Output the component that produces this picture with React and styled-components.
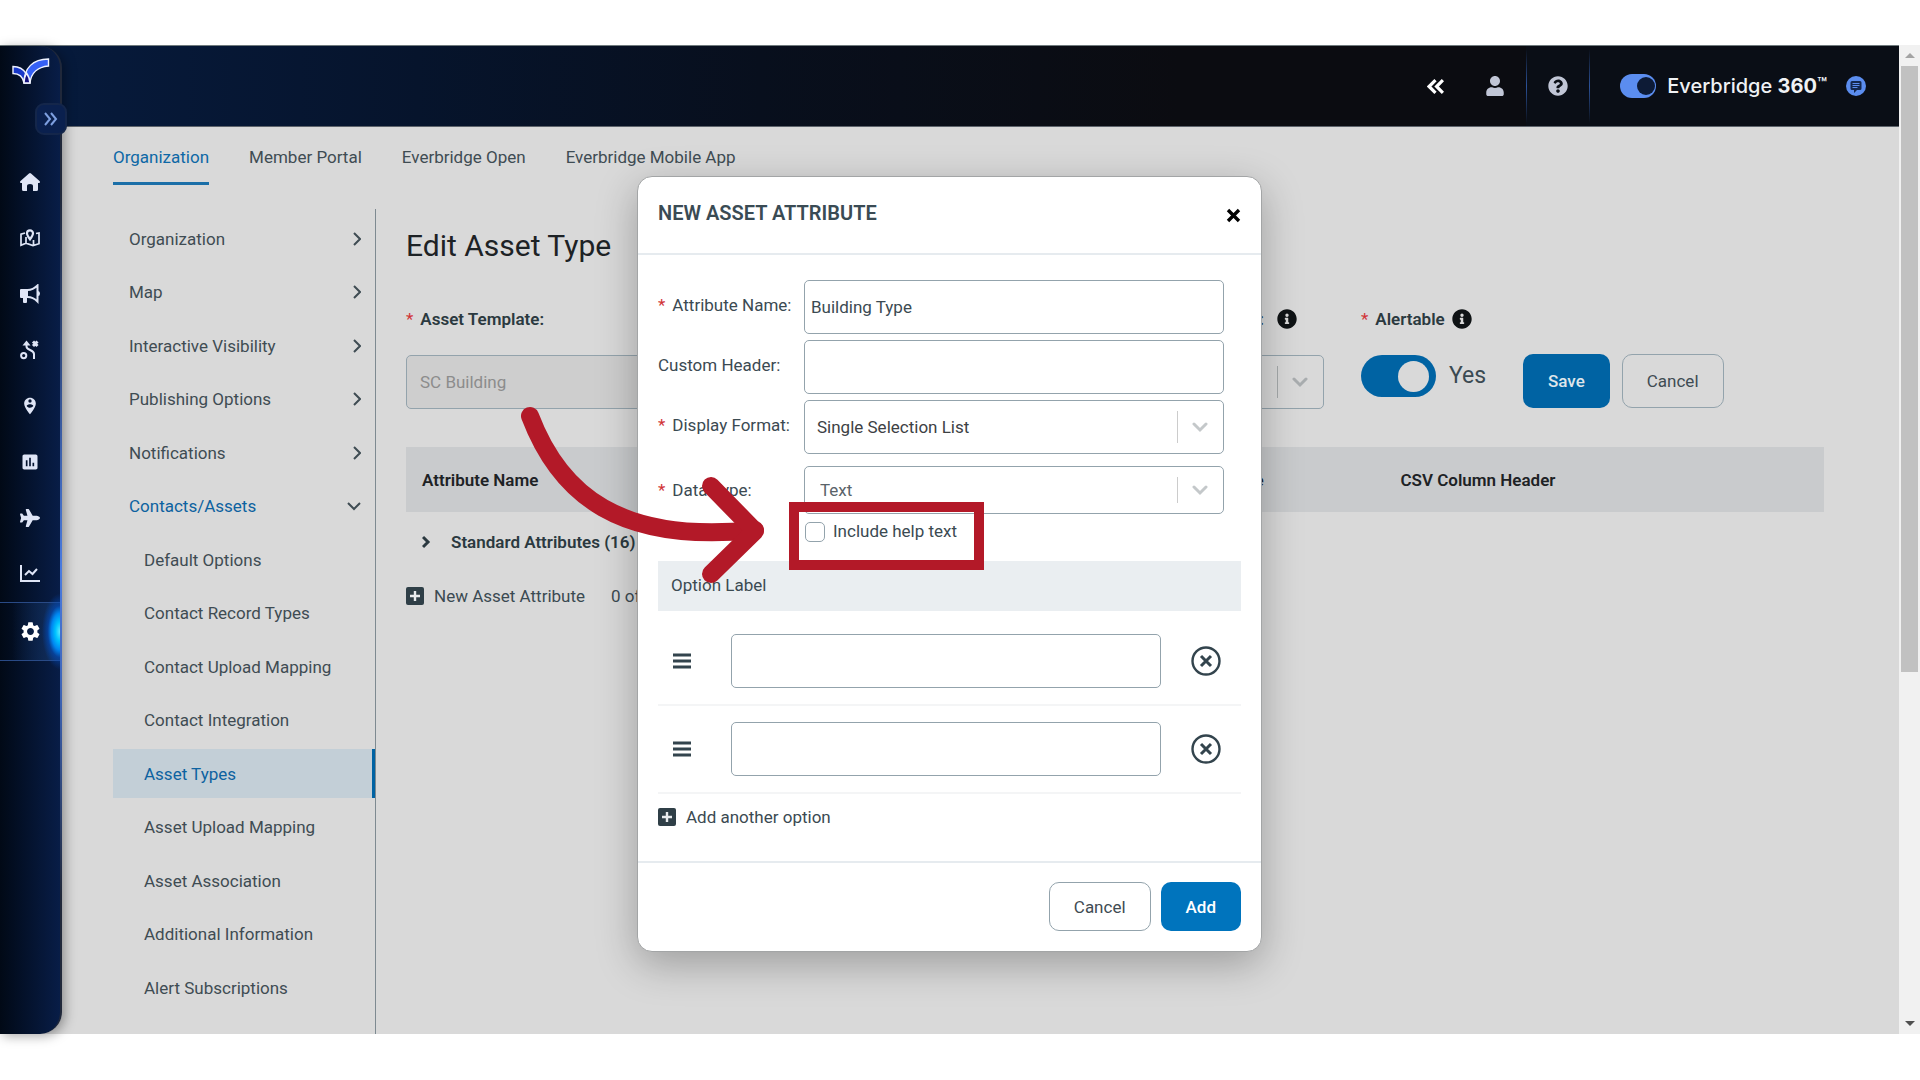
import React from "react";
import styled, { createGlobalStyle, css } from "styled-components";
import { FaInfoCircle, FaPlane, FaQuestionCircle, FaUser } from "react-icons/fa";
import { MdAssessment, MdPersonPinCircle, MdSettings } from "react-icons/md";

const GlobalStyle = createGlobalStyle`
    * {
        box-sizing: border-box;
    }
    body {
        margin: 0;
        background: #fff;
        color: #3b4a52;
        font-family: Roboto, "Liberation Sans", sans-serif;
        font-size: 17px;
        line-height: 20px;
    }
    button, input, select {
        font: inherit;
        color: inherit;
    }
    a {
        color: inherit;
        text-decoration: none;
    }
    ul {
        margin: 0;
        padding: 0;
        list-style: none;
    }
    svg {
        display: block;
        flex: none;
    }
`;

const Page = styled.div`
    display: flex;
    min-height: 100vh;
    padding: 45px 0 46px;
`;
const Shell = styled.div`
    position: relative;
    display: grid;
    flex: 1;
    grid-template-columns: 62px minmax(0, 1fr);
    grid-template-rows: 82px 1fr;
    background: #d9d9d9;
`;

/* top bar */
const TopBar = styled.header`
    grid-column: 1 / -1;
    grid-row: 1;
    display: flex;
    justify-content: flex-end;
    border-top: 1px solid #6f7a7d;
    border-bottom: 1px solid #5d636b;
    background: linear-gradient(90deg, #061b3e 0, #06142c 22%, #080f1d 40%, #0b0c11 62%);
`;
const BarButton = styled.button`
    display: flex;
    align-items: center;
    justify-content: center;
    width: ${({ $width }) => $width}px;
    padding: 0;
    border: 0;
    background: none;
    color: ${({ $bright }) => ($bright ? "#fff" : "#c1c6d6")};
`;
const BarGroup = styled.div`
    display: flex;
    align-items: center;
    height: 100%;
    padding-right: 14px;
    background: #0a0e16;
`;
const BarLine = styled.span`
    width: 1px;
    height: 74px;
    background: linear-gradient(#0a0e16, #2c5299 50%, #0a0e16);
`;
const Suite = styled.label`
    display: flex;
    align-items: center;
    gap: 11px;
    padding-left: 30px;
    color: #f0f2f5;
    font-family: Inter, "Liberation Sans", sans-serif;
    font-size: 20px;
    font-weight: 500;
    b {
        font-weight: 700;
    }
    small {
        font-size: 16px;
        font-weight: 600;
        vertical-align: 4px;
        line-height: 12px;
    }
`;
const Toggle = styled.input`
    appearance: none;
    display: flex;
    align-items: center;
    justify-content: flex-end;
    flex: none;
    margin: 0;
    width: ${({ $large }) => ($large ? 75 : 36)}px;
    height: ${({ $large }) => ($large ? 42 : 24)}px;
    padding: ${({ $large }) => ($large ? "0 7px" : "0 1px")};
    border-radius: 21px;
    background: ${({ $large }) => ($large ? "#0063a3" : "#5b8def")};
    &::before {
        content: "";
        width: ${({ $large }) => ($large ? 31 : 18)}px;
        height: ${({ $large }) => ($large ? 31 : 18)}px;
        border-radius: 50%;
        background: ${({ $large }) => ($large ? "#d9d9d9" : "#0d1b36")};
    }
`;

/* icon rail */
const Rail = styled.aside`
    grid-column: 1;
    grid-row: 1 / -1;
    z-index: 1;
    margin-top: 1px;
    border-right: 2px solid transparent;
    border-radius: 0 22px 22px 0;
    background:
        linear-gradient(90deg, #010916 0, #04122c 45%, #081d47 100%) padding-box,
        linear-gradient(#20283a 0, #20283a 15%, #4a7be0 53%, #3d63b4 66%, #20283a 86%) border-box;
    box-shadow: 3px 2px 12px rgba(0, 0, 0, 0.35);
`;
const Brand = styled.a`
    display: block;
    height: 57px;
    padding: 12px 0 0 12px;
`;
const Expand = styled.button`
    display: flex;
    align-items: center;
    justify-content: center;
    width: 32px;
    height: 32px;
    margin: 0 -7px 19px 35px;
    padding: 0;
    border: 2px solid #14264a;
    border-radius: 9px;
    background: #0a204e;
    color: #7d9fe0;
`;
const RailLink = styled.a`
    position: relative;
    display: flex;
    align-items: center;
    justify-content: center;
    height: 56px;
    color: #dfe5f6;
    ${({ $active }) =>
        $active &&
        css`
            height: 59px;
            color: #fff;
            border-block: 1px solid #294a86;
            background: linear-gradient(90deg, transparent 20%, #12305f 100%);
            &::after {
                content: "";
                position: absolute;
                inset: -10px 0 -10px auto;
                width: 18px;
                background: radial-gradient(ellipse 18px 38px at 100% 50%, #5eeaff 0, #00c3ff 25%, #0086f0 48%, rgba(0, 80, 200, 0.55) 68%, transparent 100%);
            }
        `}
`;

/* main area */
const Main = styled.main`
    grid-column: 2;
    grid-row: 2;
    display: flex;
    flex-direction: column;
    padding: 0 75px 0 51px;
`;
const Tabs = styled.nav`
    display: flex;
    gap: 40px;
    margin-bottom: 24px;
`;
const Tab = styled.a`
    padding: 20px 0 15px;
    border-bottom: 3px solid ${({ $active }) => ($active ? "#1b6fa8" : "transparent")};
    color: ${({ $active }) => ($active ? "#0d68a6" : "#3f4c53")};
`;
const Columns = styled.div`
    display: flex;
    flex: 1;
`;
const SideNav = styled.ul`
    display: flex;
    flex: 0 0 263px;
    flex-direction: column;
    justify-content: space-between;
    padding: 5px 0 22px;
    border-right: 1px solid #7e8a91;
`;
const NavLink = styled.a`
    display: flex;
    align-items: center;
    justify-content: space-between;
    height: 49px;
    padding: 0 14px 0 ${({ $sub }) => ($sub ? 31 : 16)}px;
    color: ${({ $active, $open }) => ($active || $open ? "#0d62a0" : "#3f4c53")};
    svg {
        color: #3f4c53;
    }
    ${({ $active }) =>
        $active &&
        css`
            border-right: 3px solid #0063a3;
            background: #c3cfd7;
        `}
`;
const Content = styled.section`
    flex: 1;
    min-width: 0;
    padding: 19px 0 0 30px;
`;
const Title = styled.h1`
    margin: 0 0 45px;
    color: #1d2225;
    font-size: 30px;
    font-weight: 400;
    line-height: 36px;
`;
const FormRow = styled.div`
    display: flex;
    margin-bottom: 38px;
`;
const Field = styled.div`
    flex: none;
    width: ${({ $width }) => $width}px;
    margin-right: ${({ $after }) => $after}px;
`;
const FieldLabel = styled.label`
    display: flex;
    align-items: center;
    justify-content: ${({ $end }) => ($end ? "flex-end" : "flex-start")};
    gap: ${({ $end }) => ($end ? 13 : 7)}px;
    height: 20px;
    margin-bottom: 26px;
    padding-right: ${({ $end }) => ($end ? 27 : 0)}px;
    color: #2b3940;
    font-weight: 600;
    svg {
        color: #0f1315;
    }
`;
const Star = styled.span`
    margin-right: ${({ $wide }) => ($wide ? 7 : 0)}px;
    color: #d13438;
    font-weight: 400;
`;
const TextBox = styled.input`
    display: block;
    width: 100%;
    height: 54px;
    padding: 0 ${({ disabled }) => (disabled ? 13 : 6)}px;
    border: 1px solid #93a3ac;
    border-radius: 5px;
    background: ${({ disabled }) => (disabled ? "#cecece" : "#fff")};
    color: ${({ disabled }) => (disabled ? "#8c8c8c" : "#3b4a52")};
`;
const SelectWrap = styled.div`
    position: relative;
    color: ${({ $dim }) => ($dim ? "#a9adaf" : "#c4c8ca")};
    svg {
        position: absolute;
        top: 50%;
        right: 16px;
        margin-top: -5px;
    }
    &::after {
        content: "";
        position: absolute;
        top: 11px;
        bottom: 11px;
        right: 46px;
        width: 1px;
        background: ${({ $dim }) => ($dim ? "#a5a9ab" : "#ccc")};
    }
`;
const Select = styled.select`
    appearance: none;
    display: block;
    width: 100%;
    height: ${({ $short }) => ($short ? 48 : 54)}px;
    padding: 0 50px 0 ${({ $short }) => ($short ? 15 : 12)}px;
    border: 1px solid #93a3ac;
    border-radius: 5px;
    background: ${({ $dim }) => ($dim ? "#cecece" : "#fff")};
    background: transparent;
    color: ${({ $short }) => ($short ? "#5a6369" : "#3d4144")};
`;
const YesNo = styled.div`
    display: flex;
    align-items: center;
    gap: 13px;
    font-size: 23px;
`;
const Button = styled.button`
    height: ${({ $tall }) => ($tall ? 54 : 49)}px;
    padding: 0 24px;
    border: 1px solid ${({ $primary }) => ($primary ? "transparent" : "#93a3ac")};
    border-radius: 10px;
    background: ${({ $primary, $tall }) => {
        if (!$primary) return "transparent";
        return $tall ? "#0063a3" : "#0074bd";
    }};
    color: ${({ $primary, $tall }) => {
        if (!$primary) return "#3f4c53";
        return $tall ? "#dfe6eb" : "#fff";
    }};
    font-weight: ${({ $primary }) => ($primary ? 500 : 400)};
`;
const FormActions = styled.div`
    display: flex;
    gap: 12px;
    margin-top: 45px;
`;
const Table = styled.table`
    width: 100%;
    border-collapse: collapse;
    table-layout: fixed;
    th {
        height: 65px;
        padding: 0 16px;
        background: #c9cbcd;
        color: #1d2225;
        font-weight: 600;
        text-align: left;
    }
    td {
        height: 59px;
        padding: 0 16px;
        color: #2b3940;
        font-weight: 600;
    }
`;
const GroupToggle = styled.button`
    display: flex;
    align-items: center;
    gap: 20px;
    padding: 0;
    border: 0;
    background: none;
`;
const AddLine = styled.div`
    display: flex;
    align-items: center;
    gap: 26px;
    margin-top: 15px;
`;
const AddButton = styled.button`
    display: flex;
    align-items: center;
    gap: 10px;
    padding: 0;
    border: 0;
    background: none;
    svg {
        color: #2f3f47;
    }
`;

/* dialog */
const Overlay = styled.div`
    position: absolute;
    inset: 0;
    z-index: 2;
    display: flex;
    justify-content: center;
    align-items: flex-start;
    padding-top: 131px;
`;
const Dialog = styled.section`
    position: relative;
    width: 625px;
    border: 1px solid #a3a5a6;
    border-radius: 15px;
    background: #fff;
    box-shadow: 0 12px 40px rgba(0, 0, 0, 0.28);
`;
const DialogHead = styled.div`
    display: flex;
    align-items: center;
    justify-content: space-between;
    height: 78px;
    padding: 0 20px 4px;
    border-bottom: 2px solid #e6ebef;
    h2 {
        margin: 0;
        color: #3a4b54;
        font-size: 20px;
        font-weight: 600;
    }
`;
const IconButton = styled.button`
    display: flex;
    padding: ${({ $dark }) => ($dark ? "4px 0 0" : 0)};
    border: 0;
    background: none;
    color: ${({ $dark }) => ($dark ? "#000" : "#33444d")};
`;
const DialogBody = styled.div`
    padding: 25px 20px 34px;
`;
const DialogRow = styled.div`
    display: grid;
    grid-template-columns: 146px 420px;
    align-items: center;
    margin-bottom: ${({ $gap }) => $gap}px;
    > label {
        padding-bottom: ${({ $level }) => ($level ? 0 : 4)}px;
        white-space: nowrap;
    }
`;
const CheckLabel = styled.label`
    display: flex;
    gap: 8px;
    width: 160px;
    height: 40px;
    margin-left: 147px;
`;
const CheckBox = styled.input`
    appearance: none;
    flex: none;
    width: 20px;
    height: 20px;
    margin: 1px 0 0;
    border: 1px solid #93a3ac;
    border-radius: 5px;
    background: #fff;
`;
const OptionHead = styled.div`
    height: 50px;
    padding: 14px 13px;
    background: #eaeef1;
`;
const OptionRow = styled.li`
    display: flex;
    align-items: center;
    gap: 30px;
    padding: 16px 20px 16px 15px;
    border-bottom: 2px solid #f4f5f6;
    &:first-child {
        padding-top: 23px;
    }
    > svg {
        margin-right: 10px;
        color: #33444d;
    }
`;
const AddOption = styled.div`
    margin-top: 13px;
`;
const DialogFoot = styled.div`
    display: flex;
    justify-content: flex-end;
    gap: 10px;
    padding: 19px 20px 20px;
    border-top: 2px solid #e6ebef;
`;
const Highlight = styled.div`
    position: absolute;
    left: 151px;
    top: 325px;
    width: 195px;
    height: 68px;
    border: 10px solid #b31928;
    pointer-events: none;
`;
const Pointer = styled.svg`
    position: absolute;
    left: -118px;
    top: 223px;
    pointer-events: none;
`;

/* window scroll bar */
const ScrollTrack = styled.div`
    display: flex;
    flex-direction: column;
    align-items: center;
    width: 21px;
    background: #f1f1f1;
`;
const ScrollArrow = styled.div`
    display: flex;
    align-items: center;
    justify-content: center;
    height: 21px;
    color: ${({ $dark }) => ($dark ? "#505050" : "#a3a3a3")};
`;
const ScrollSpace = styled.div`
    flex: 1;
    width: 17px;
`;
const ScrollThumb = styled.div`
    height: 64%;
    background: #c1c1c1;
`;

const Chevron = ({ down }) => (
    <svg width="14" height="14" viewBox="0 0 14 14" fill="none" stroke="currentColor" strokeWidth="2">
        <path d={down ? "M1 4l6 6 6-6" : "M7 1l6 6-6 6"} />
    </svg>
);

const RowChevron = () => (
    <svg width="9" height="14" viewBox="0 0 9 14" fill="none" stroke="currentColor" strokeWidth="3">
        <path d="M1 2l5 5-5 5" />
    </svg>
);

const SelectChevron = () => (
    <svg width="16" height="11" viewBox="0 0 16 11" fill="none" stroke="currentColor" strokeWidth="3">
        <path d="M2 2l6 6 6-6" strokeLinecap="round" />
    </svg>
);

const DoubleChevron = ({ left, size, stroke }) => (
    <svg width={size} height={size} viewBox="0 0 16 16" fill="none" stroke="currentColor" strokeWidth={stroke}>
        {left ? <path d="M8 2L2 8l6 6M15 2L9 8l6 6" /> : <path d="M2 2l5 6-5 6M8 2l5 6-5 6" />}
    </svg>
);

const Logo = () => (
    <svg width="38" height="27" viewBox="0 0 38 27" stroke="#eef2ff" strokeWidth="1.4">
        <path d="M1 8.5c6 0 10 2 13 7-1 3-2 6-2 9.500-1-6-5-9.500-11-9.500z" fill="#1838c8" />
        <path d="M12 25C12 10 21 1 36.500 1v7C26 9 19 15 18 25z" fill="#3560f5" />
        <path d="M12 25c0-4 1-7 2.500-10 2 3 3.500 6 3.500 10z" fill="#14107c" />
    </svg>
);

const HomeIcon = () => (
    <svg width="20" height="20" viewBox="0 0 20 20" fill="currentColor">
        <path d="M9 1.400q1-.8 2 0l8.500 7.600c.8.8.5 2-.5 2h-1v6.500q0 1.500-1.500 1.500H13v-5q0-2-3-2t-3 2v5H3.500Q2 19 2 17.500V11H1c-1 0-1.300-1.200-.5-2z" />
    </svg>
);

const MapIcon = () => (
    <svg width="20" height="18" viewBox="0 0 20 18" fill="none" stroke="currentColor" strokeWidth="1.7">
        <path d="M5 4L1 5.200v11l5-2 7 2.300 6-1.800V4l-3 .5M6 8v6M13.500 11v5" />
        <path d="M10 1.300a3 3 0 0 0-3 3c0 2 3 6 3 6s3-4 3-6a3 3 0 0 0-3-3z" strokeWidth="2.200" />
    </svg>
);

const HornIcon = () => (
    <svg width="20" height="20" viewBox="0 0 20 20" fill="currentColor">
        <path d="M1 5h7v9H7v4q0 1-1 1H4q-1 0-1-1v-4H1q-1 0-1-1V6q0-1 1-1z" />
        <path d="M7.500 6C12 6 15 4 17.500 1.500v16C15 15 12 13 7.500 13" fill="none" stroke="currentColor" strokeWidth="2" />
        <path d="M18 7q2 0 2 2.500T18 12z" />
    </svg>
);

const RouteIcon = () => (
    <svg width="20" height="20" viewBox="0 0 20 20" fill="none" stroke="currentColor" strokeWidth="2">
        <circle cx="3.700" cy="15.600" r="2.600" />
        <path d="M6.500 3v3.500c0 4 7.500 3 7.500 7.500v5" />
        <path d="M2.500 5.500l4-5 4 5z" fill="currentColor" stroke="none" />
        <path d="M13 1.500l4.500 4.500M17.500 1.500L13 6" strokeWidth="3" />
    </svg>
);

const TrendIcon = () => (
    <svg width="20" height="18" viewBox="0 0 20 18" fill="none" stroke="currentColor" strokeWidth="2">
        <path d="M1 0v16h19" />
        <path d="M5 10l4-4 3.500 3L17 4" />
    </svg>
);

const ChatIcon = () => (
    <svg width="20" height="20" viewBox="0 0 20 20">
        <circle cx="10" cy="10" r="10" fill="#5b8def" />
        <path d="M6 5h8q1.500 0 1.500 1.500v6Q15.500 14 14 14h-3l-3 3v-3H6q-1.500 0-1.500-1.500v-6Q4.500 5 6 5z" fill="#14284f" />
        <path d="M6.500 7.500h7M6.500 9.500h7M6.500 11.500h5" stroke="#5b8def" />
    </svg>
);

const CrossIcon = () => (
    <svg width="15" height="15" viewBox="0 0 15 15" fill="none" stroke="currentColor" strokeWidth="3.400">
        <path d="M2 2l11 11M13 2L2 13" />
    </svg>
);

const PlusIcon = () => (
    <svg width="18" height="18" viewBox="0 0 18 18">
        <rect width="18" height="18" rx="2" fill="currentColor" />
        <path d="M9 4v10M4 9h10" stroke="#e9ecee" strokeWidth="2.400" />
    </svg>
);

const GripIcon = () => (
    <svg width="18" height="18" viewBox="0 0 18 18" fill="none" stroke="currentColor" strokeWidth="3">
        <path d="M0 3h18M0 9h18M0 15h18" />
    </svg>
);

const RemoveIcon = () => (
    <svg width="30" height="30" viewBox="0 0 30 30" fill="none" stroke="currentColor">
        <circle cx="15" cy="15" r="13.500" strokeWidth="2.400" />
        <path d="M10 10l10 10M20 10L10 20" strokeWidth="3" />
    </svg>
);

const railItems = [
    { name: "Home", icon: <HomeIcon /> },
    { name: "Map", icon: <MapIcon /> },
    { name: "Communications", icon: <HornIcon /> },
    { name: "Plans", icon: <RouteIcon /> },
    { name: "People", icon: <MdPersonPinCircle size={20} /> },
    { name: "Reports", icon: <MdAssessment size={20} /> },
    { name: "Travel", icon: <FaPlane size={20} /> },
    { name: "Analytics", icon: <TrendIcon /> },
    { name: "Settings", icon: <MdSettings size={23} />, active: true },
];

const tabs = ["Organization", "Member Portal", "Everbridge Open", "Everbridge Mobile App"];

const navItems = [
    { text: "Organization" },
    { text: "Map" },
    { text: "Interactive Visibility" },
    { text: "Publishing Options" },
    { text: "Notifications" },
    { text: "Contacts/Assets", open: true },
    { text: "Default Options", sub: true },
    { text: "Contact Record Types", sub: true },
    { text: "Contact Upload Mapping", sub: true },
    { text: "Contact Integration", sub: true },
    { text: "Asset Types", sub: true, active: true },
    { text: "Asset Upload Mapping", sub: true },
    { text: "Asset Association", sub: true },
    { text: "Additional Information", sub: true },
    { text: "Alert Subscriptions", sub: true },
];

const Header = () => (
    <TopBar>
        <BarButton $width={56} $bright aria-label="Collapse">
            <DoubleChevron left size={17} stroke={3} />
        </BarButton>
        <BarButton $width={63} aria-label="Account">
            <FaUser size={20} />
        </BarButton>
        <BarGroup>
            <BarLine />
            <BarButton $width={62} aria-label="Help">
                <FaQuestionCircle size={20} />
            </BarButton>
            <BarLine />
            <Suite>
                <Toggle type="checkbox" defaultChecked />
                <span>
                    Everbridge <b>360</b>
                    <small>™</small>
                </span>
            </Suite>
            <BarButton $width={58} aria-label="Messages">
                <ChatIcon />
            </BarButton>
        </BarGroup>
    </TopBar>
);

const AssetTypeForm = () => (
    <FormRow>
        <Field $width={444} $after={30}>
            <FieldLabel htmlFor="template">
                <Star>*</Star>
                Asset Template:
            </FieldLabel>
            <TextBox id="template" defaultValue="SC Building" disabled />
        </Field>
        <Field $width={444} $after={37}>
            <FieldLabel htmlFor="display" $end>
                Display Attribute:
                <FaInfoCircle size={20} />
            </FieldLabel>
            <SelectWrap $dim>
                <Select id="display" />
                <SelectChevron />
            </SelectWrap>
        </Field>
        <Field $width={162} $after={0}>
            <FieldLabel htmlFor="alertable">
                <Star>*</Star>
                Alertable
                <FaInfoCircle size={20} />
            </FieldLabel>
            <YesNo>
                <Toggle id="alertable" type="checkbox" $large defaultChecked />
                Yes
            </YesNo>
        </Field>
        <FormActions>
            <Button $primary $tall>Save</Button>
            <Button $tall>Cancel</Button>
        </FormActions>
    </FormRow>
);

const AttributeDialog = () => (
    <Overlay>
        <Dialog role="dialog" aria-labelledby="dialog-title">
            <DialogHead>
                <h2 id="dialog-title">NEW ASSET ATTRIBUTE</h2>
                <IconButton $dark aria-label="Close">
                    <CrossIcon />
                </IconButton>
            </DialogHead>
            <DialogBody>
                <DialogRow $gap={6}>
                    <label htmlFor="attr-name"><Star $wide>*</Star>Attribute Name:</label>
                    <TextBox id="attr-name" defaultValue="Building Type" />
                </DialogRow>
                <DialogRow $gap={6}>
                    <label htmlFor="custom-header">Custom Header:</label>
                    <TextBox id="custom-header" />
                </DialogRow>
                <DialogRow $gap={12}>
                    <label htmlFor="format"><Star $wide>*</Star>Display Format:</label>
                    <SelectWrap>
                        <Select id="format">
                            <option>Single Selection List</option>
                        </Select>
                        <SelectChevron />
                    </SelectWrap>
                </DialogRow>
                <DialogRow $gap={7} $level>
                    <label htmlFor="data-type"><Star $wide>*</Star>Data Type:</label>
                    <SelectWrap>
                        <Select id="data-type" $short>
                            <option>Text</option>
                        </Select>
                        <SelectChevron />
                    </SelectWrap>
                </DialogRow>
                <CheckLabel>
                    <CheckBox type="checkbox" />
                    Include help text
                </CheckLabel>
                <OptionHead>Option Label</OptionHead>
                <ul>
                    {[1, 2].map((n) => (
                        <OptionRow key={n}>
                            <GripIcon />
                            <TextBox aria-label={`Option ${n}`} />
                            <IconButton aria-label={`Remove option ${n}`}>
                                <RemoveIcon />
                            </IconButton>
                        </OptionRow>
                    ))}
                </ul>
                <AddOption>
                    <AddButton>
                        <PlusIcon />
                        Add another option
                    </AddButton>
                </AddOption>
            </DialogBody>
            <DialogFoot>
                <Button>Cancel</Button>
                <Button $primary>Add</Button>
            </DialogFoot>
            <Highlight />
            <Pointer width="260" height="190" viewBox="520 400 260 190" fill="none" stroke="#b31928" strokeWidth="18" strokeLinecap="round" strokeLinejoin="round">
                <path d="M530 416C560 495 620 544 755 530" />
                <path d="M711 486L755 531L711 574" />
            </Pointer>
        </Dialog>
    </Overlay>
);

const App = () => (
    <>
        <GlobalStyle />
        <Page>
            <Shell>
                <Header />
                <Rail>
                    <Brand href="#" aria-label="Everbridge">
                        <Logo />
                    </Brand>
                    <Expand aria-label="Expand menu">
                        <DoubleChevron size={16} stroke={2} />
                    </Expand>
                    {railItems.map(({ name, icon, active }) => (
                        <RailLink key={name} href="#" aria-label={name} $active={active}>
                            {icon}
                        </RailLink>
                    ))}
                </Rail>
                <Main>
                    <Tabs>
                        {tabs.map((tab, i) => (
                            <Tab key={tab} href="#" $active={i === 0}>{tab}</Tab>
                        ))}
                    </Tabs>
                    <Columns>
                        <SideNav>
                            {navItems.map(({ text, sub, open, active }) => (
                                <li key={text}>
                                    <NavLink href="#" $sub={sub} $open={open} $active={active}>
                                        {text}
                                        {!sub && <Chevron down={open} />}
                                    </NavLink>
                                </li>
                            ))}
                        </SideNav>
                        <Content>
                            <Title>Edit Asset Type</Title>
                            <AssetTypeForm />
                            <Table>
                                <colgroup>
                                    <col width="54%" />
                                    <col width="15%" />
                                    <col width="31%" />
                                </colgroup>
                                <thead>
                                    <tr>
                                        <th>Attribute Name</th>
                                        <th>Data Type</th>
                                        <th>CSV Column Header</th>
                                    </tr>
                                </thead>
                                <tbody>
                                    <tr>
                                        <td colSpan={3}>
                                            <GroupToggle>
                                                <RowChevron />
                                                Standard Attributes (16)
                                            </GroupToggle>
                                        </td>
                                    </tr>
                                </tbody>
                            </Table>
                            <AddLine>
                                <AddButton>
                                    <PlusIcon />
                                    New Asset Attribute
                                </AddButton>
                                <span>0 of 200</span>
                            </AddLine>
                        </Content>
                    </Columns>
                </Main>
                <AttributeDialog />
            </Shell>
            <ScrollTrack>
                <ScrollArrow>
                    <svg width="10" height="5" viewBox="0 0 10 5" fill="currentColor"><path d="M0 5l5-5 5 5z" /></svg>
                </ScrollArrow>
                <ScrollSpace>
                    <ScrollThumb />
                </ScrollSpace>
                <ScrollArrow $dark>
                    <svg width="10" height="5" viewBox="0 0 10 5" fill="currentColor"><path d="M0 0l5 5 5-5z" /></svg>
                </ScrollArrow>
            </ScrollTrack>
        </Page>
    </>
);

export default App;
